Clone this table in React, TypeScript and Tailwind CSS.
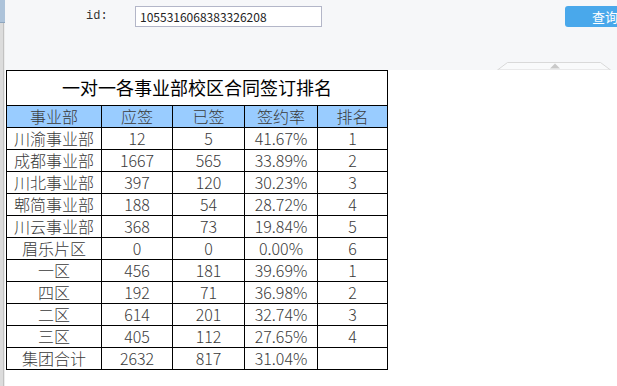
import React from 'react';

type Row = { name: string; should: string; signed: string; rate: string; rank: string };

const rows: Row[] = [
    { name: '川渝事业部', should: '12', signed: '5', rate: '41.67%', rank: '1' },
    { name: '成都事业部', should: '1667', signed: '565', rate: '33.89%', rank: '2' },
    { name: '川北事业部', should: '397', signed: '120', rate: '30.23%', rank: '3' },
    { name: '郫简事业部', should: '188', signed: '54', rate: '28.72%', rank: '4' },
    { name: '川云事业部', should: '368', signed: '73', rate: '19.84%', rank: '5' },
    { name: '眉乐片区', should: '0', signed: '0', rate: '0.00%', rank: '6' },
    { name: '一区', should: '456', signed: '181', rate: '39.69%', rank: '1' },
    { name: '四区', should: '192', signed: '71', rate: '36.98%', rank: '2' },
    { name: '二区', should: '614', signed: '201', rate: '32.74%', rank: '3' },
    { name: '三区', should: '405', signed: '112', rate: '27.65%', rank: '4' },
    { name: '集团合计', should: '2632', signed: '817', rate: '31.04%', rank: '' },
];

const headers = ['事业部', '应签', '已签', '签约率', '排名'];

const cell = 'h-[22px] leading-[21px] border-r border-b border-black text-center whitespace-nowrap';

export default function App() {
    return (
        <div
            className="w-[617px] h-[386px] flex overflow-hidden bg-white"
            style={{ fontFamily: '"Noto Sans CJK SC", "Noto Sans", sans-serif' }}
        >
            {/* left frame strip */}
            <div className="w-[5px] flex flex-col shrink-0">
                <div className="h-[23px] bg-[#adc3da] border-b border-[#8ea6bf]" />
                <div className="flex-1 flex">
                    <div className="w-[3px] bg-[#dcdcdc]" />
                    <div className="w-px bg-[#c2c2c2]" />
                    <div className="w-px bg-[#ececec]" />
                </div>
            </div>

            <div className="flex-1 flex flex-col">
                {/* search bar */}
                <div className="relative h-[70px] bg-[#f6f7f9] shrink-0">
                    <div className="flex items-start pt-[6px]">
                        <span
                            className="w-[130px] pl-[81px] text-[12px] leading-[21px] font-normal text-[#333]"
                            style={{ fontFamily: '"Liberation Mono", monospace' }}
                        >
                            id:
                        </span>
                        <div className="w-[187px] h-[21px] border border-[#b3b6c8] bg-white pl-[4px] text-[12px] leading-[19px] text-[#222]">
                            1055316068383326208
                        </div>
                        <div className="ml-[243px] w-[64px] h-[21px] rounded-[3px] bg-[#49a8eb] text-white text-[13px] leading-[21px] pl-[27px] shrink-0">
                            查询
                        </div>
                    </div>

                    {/* collapse handle */}
                    <svg className="absolute left-[492px] top-[61px]" width="114" height="9" viewBox="0 0 114 9">
                        <path d="M0.5 9 L10.5 1.5 L103.5 1.5 L113.5 9 Z" fill="#f9fafb" stroke="#d9d9d9" />
                        <path d="M53 7.5 L58 2.5 L63 7.5 Z" fill="#c9c9c9" />
                    </svg>
                </div>

                {/* table */}
                <div className="ml-px w-[382px] border-l border-t border-black text-[16px] font-light text-[#3a3a3a]">
                    <div className="h-[35px] leading-[33px] border-r border-b border-black text-center text-[18px] font-normal text-black">
                        一对一各事业部校区合同签订排名
                    </div>
                    <div className="grid grid-cols-[95px_71px_72px_73px_70px] bg-[#99ccff]">
                        {headers.map((h) => (
                            <div key={h} className={cell}>
                                {h}
                            </div>
                        ))}
                    </div>
                    {rows.map((r) => (
                        <div key={r.name} className="grid grid-cols-[95px_71px_72px_73px_70px]">
                            <div className={cell}>{r.name}</div>
                            <div className={cell}>{r.should}</div>
                            <div className={cell}>{r.signed}</div>
                            <div className={cell}>{r.rate}</div>
                            <div className={cell}>{r.rank}</div>
                        </div>
                    ))}
                </div>
            </div>
        </div>
    );
}
